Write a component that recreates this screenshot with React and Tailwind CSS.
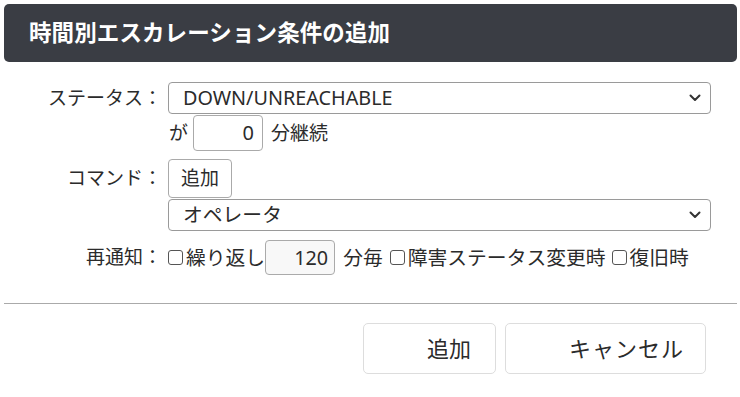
import React from "react";

const font = "font-['Noto_Sans','Noto_Sans_CJK_JP',sans-serif]";

function Chevron() {
  return (
    <svg width="12" height="8" viewBox="0 0 12 8" className="shrink-0">
      <path d="M1.5 1.5 L6 6 L10.5 1.5" fill="none" stroke="#333" strokeWidth="2" strokeLinecap="round" strokeLinejoin="round" />
    </svg>
  );
}

function FakeSelect({ value }) {
  return (
    <div className="h-[32px] w-[543px] border border-[#9a9a9a] rounded-[4px] flex items-center justify-between pl-[14px] pr-[9px] bg-white">
      <span className="leading-none text-[19.8px]">{value}</span>
      <Chevron />
    </div>
  );
}

function Check() {
  return <span className="inline-block shrink-0 w-[15px] h-[15px] border border-[#555] rounded-[3px] bg-white mr-[3px]" />;
}

export default function App() {
  return (
    <div className={`${font} w-[740px] h-[397px] bg-white text-[#2b2b2b] text-[19px] pl-[4px] pr-[3px] pt-[4px]`}>
      {/* Header */}
      <div className="h-[58px] rounded-[5px] bg-[#3a3d44] flex items-center pl-[25px]">
        <h1 className="text-white text-[22.5px] font-bold tracking-[0.1px]">時間別エスカレーション条件の追加</h1>
      </div>

      {/* Form */}
      <div className="mt-[20px]">
        <div className="flex">
          <div className="w-[158px] h-[32px] flex items-center justify-end">ステータス：</div>
          <div className="ml-[6px]">
            <FakeSelect value="DOWN/UNREACHABLE" />
            <div className="flex items-center mt-[1px]">
              <span className="ml-[1px]">が</span>
              <div className="ml-[5px] w-[70px] h-[36px] border border-[#aaa] rounded-[4px] flex items-center justify-end pr-[8px] text-[20px]">0</div>
              <span className="ml-[8px]">分継続</span>
            </div>
          </div>
        </div>

        <div className="flex mt-[8px]">
          <div className="w-[158px] h-[39px] flex items-center justify-end">コマンド：</div>
          <div className="ml-[6px]">
            <div className="w-[64px] h-[39px] border border-[#aaa] rounded-[4px] flex items-center justify-center">追加</div>
            <div className="mt-[1px]">
              <FakeSelect value="オペレータ" />
            </div>
          </div>
        </div>

        <div className="flex items-center mt-[9px] h-[35px]">
          <div className="w-[158px] text-right">再通知：</div>
          <div className="ml-[6px] flex items-center text-[19.8px]">
            <Check />
            <span>繰り返し</span>
            <div className="w-[70px] h-[35px] border border-[#aaa] rounded-[4px] bg-[#f8f8f8] flex items-center justify-end pr-[6px]">120</div>
            <span className="ml-[8px]">分毎</span>
            <span className="ml-[7px] flex items-center"><Check />障害ステータス変更時</span>
            <span className="ml-[6px] flex items-center"><Check />復旧時</span>
          </div>
        </div>
      </div>

      <div className="mt-[28px] h-px bg-[#aaa]" />

      {/* Footer buttons */}
      <div className="mt-[19px] flex justify-end gap-[9px] pr-[31px]">
        <button className="w-[133px] h-[51px] border border-[#ddd] rounded-[5px] text-[22px] text-left pl-[63px]">追加</button>
        <button className="w-[201px] h-[51px] border border-[#ddd] rounded-[5px] text-[22px] text-left pl-[63px] tracking-[1px]">キャンセル</button>
      </div>
    </div>
  );
}
